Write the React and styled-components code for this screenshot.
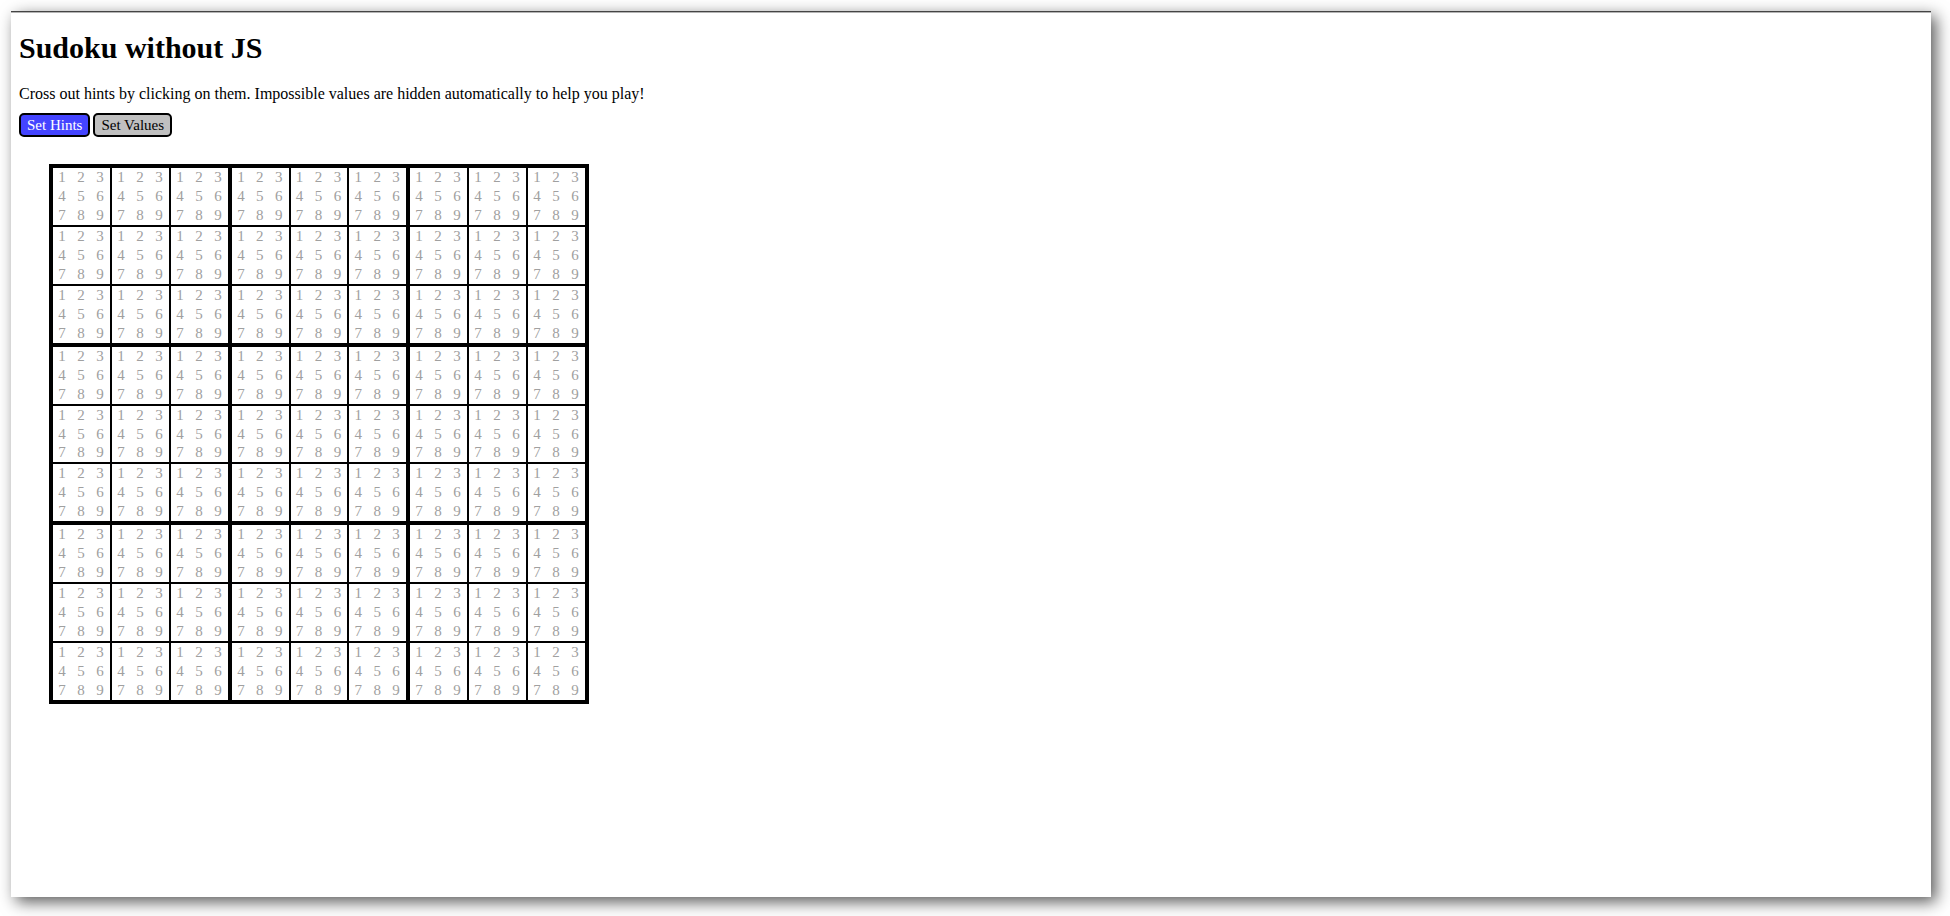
import React, { useState } from "react";
import styled, { createGlobalStyle } from "styled-components";

const GlobalStyle = createGlobalStyle`
  * { box-sizing: border-box; }
  html, body, #root { height: 100%; }
  body {
    margin: 0;
    background: #fff;
    color: #000;
    font: 15px/18px "Liberation Serif", "Times New Roman", serif;
  }
`;

const Page = styled.div`
  min-height: 100%;
  display: flex;
  padding: 11px 19px 19px 11px;
`;

const Panel = styled.main`
  flex: 1;
  padding: 0 8px 8px;
  background: #fff;
  border-top: 1px solid #444;
  box-shadow: inset 0 1px 0 #b4b4b4, 5px 5px 15px rgba(0, 0, 0, 0.65);
`;

const Title = styled.h1`
  margin: 18px 0 0;
  font-size: 30px;
  line-height: 36px;
`;

const Intro = styled.p`
  margin: 19px 0 10px;
  font-size: 16px;
`;

const Toolbar = styled.div`
  display: flex;
  gap: 3px;
`;

const ModeButton = styled.button`
  height: 24px;
  padding: 0 6px;
  border: 2px solid #000;
  border-radius: 5px;
  background: ${(p) => (p.$active ? "#4444ff" : "#c0c0c0")};
  color: ${(p) => (p.$active ? "#fff" : "#000")};
  font: inherit;
  cursor: pointer;
`;

const Board = styled.div`
  display: grid;
  grid-template-columns: 175px 174px 175px;
  grid-template-rows: 175px 174px 175px;
  gap: 4px;
  width: fit-content;
  margin: 27px 30px 0;
  border: 4px solid #000;
  background: #000;
`;

const Block = styled.div`
  display: grid;
  grid-template-columns: repeat(3, minmax(0, 1fr));
  grid-template-rows: repeat(3, minmax(0, 1fr));
  gap: 2px;
`;

const Cell = styled.div`
  display: grid;
  grid-template-columns: repeat(3, minmax(0, 1fr));
  grid-template-rows: repeat(3, minmax(0, 1fr));
  background: #fff;
`;

const Hint = styled.button`
  padding: 0 1px 2px 0;
  border: 0;
  background: none;
  color: #a0a0a0;
  font: inherit;
  text-align: center;
  text-decoration: ${(p) => (p.$crossed ? "line-through" : "none")};
  cursor: pointer;
`;

const NINE = [1, 2, 3, 4, 5, 6, 7, 8, 9];

export default function App() {
  const [mode, setMode] = useState("hints");
  const [crossed, setCrossed] = useState({});
  const toggle = (key) => setCrossed((c) => ({ ...c, [key]: !c[key] }));

  return (
    <Page>
      <GlobalStyle />
      <Panel>
        <Title>Sudoku without JS</Title>
        <Intro>
          Cross out hints by clicking on them. Impossible values are hidden automatically to help you play!
        </Intro>
        <Toolbar>
          <ModeButton type="button" $active={mode === "hints"} aria-pressed={mode === "hints"} onClick={() => setMode("hints")}>
            Set Hints
          </ModeButton>
          <ModeButton type="button" $active={mode === "values"} aria-pressed={mode === "values"} onClick={() => setMode("values")}>
            Set Values
          </ModeButton>
        </Toolbar>
        <Board>
          {NINE.map((block) => (
            <Block key={block}>
              {NINE.map((cell) => (
                <Cell key={cell}>
                  {NINE.map((n) => {
                    const key = `${block}-${cell}-${n}`;
                    return (
                      <Hint key={n} type="button" $crossed={crossed[key]} onClick={() => toggle(key)}>
                        {n}
                      </Hint>
                    );
                  })}
                </Cell>
              ))}
            </Block>
          ))}
        </Board>
      </Panel>
    </Page>
  );
}
